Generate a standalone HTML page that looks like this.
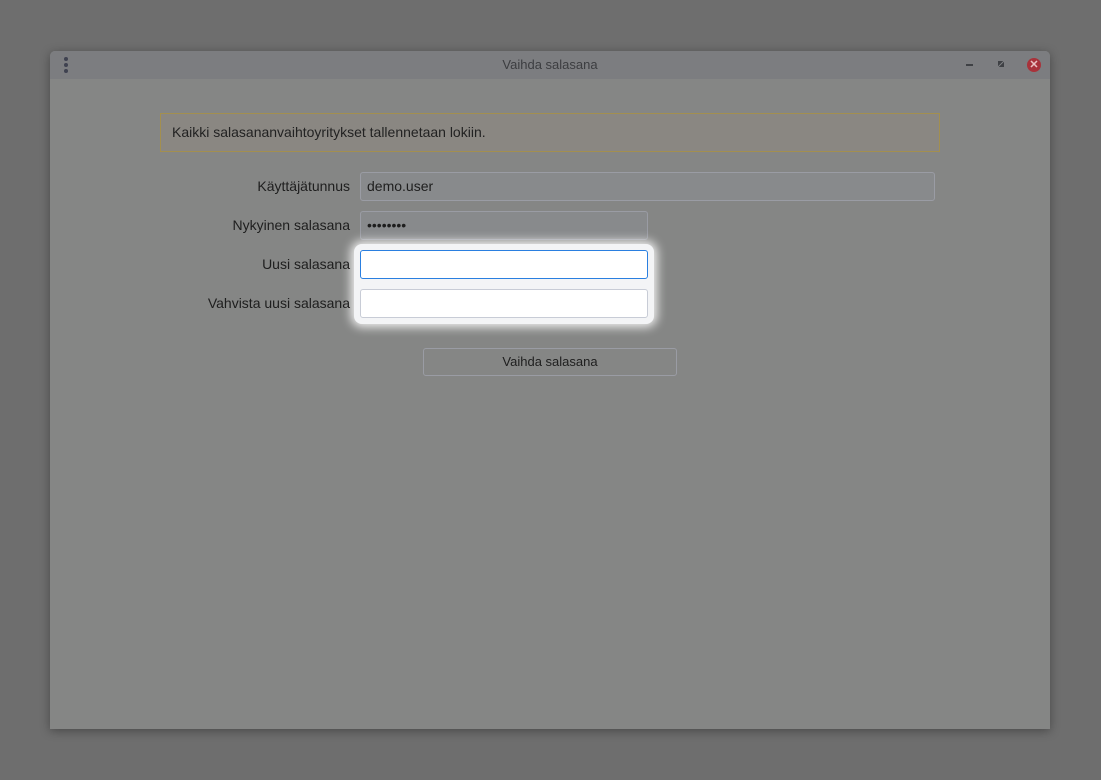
<!DOCTYPE html>
<html><head><style>
body{margin:0;width:1101px;height:780px;background:#6e6e6e;font-family:"Liberation Sans",sans-serif;position:relative;overflow:hidden}
.win{position:absolute;left:50px;top:51px;width:1000px;height:678px;background:#858685;border-radius:5px 5px 0 0;box-shadow:0 2px 10px rgba(0,0,0,.35);overflow:hidden}
.tb{height:28px;background:#7c7d80;position:relative;text-align:center;line-height:28px;font-size:13px;color:#3c3d40}
.a{position:absolute}
.lbl{position:absolute;right:700px;font-size:14px;color:#1e1e1e;line-height:29px}
.inp{position:absolute;box-sizing:border-box;border:1px solid #9a9ca4;border-radius:3px;background:#888a8c;font-size:14px;color:#1e1e1e;line-height:27px;padding-left:6px}
</style></head><body>
<div class="win">
 <div class="tb">Vaihda salasana
  <div class="a" style="left:14px;top:6px;width:4px;height:4px;border-radius:50%;background:#3f4250;box-shadow:0 6px 0 #3f4250,0 12px 0 #3f4250"></div>
  <div class="a" style="left:916px;top:13px;width:7px;height:2px;background:#3f4145"></div>
  <div class="a" style="left:948px;top:10px;width:6px;height:6px;background:linear-gradient(135deg,#3f4145 45%,transparent 45%,transparent 55%,#3f4145 55%)"></div>
  <div class="a" style="left:977px;top:7px;width:14px;height:14px;border-radius:50%;background:#a8323a;color:#e8c0c0;font-size:11px;line-height:14px;font-weight:bold">✕</div>
 </div>
 <div class="a" style="left:110px;top:62px;width:780px;height:39px;box-sizing:border-box;border:1px solid #a38f4f;background:#8a8782;font-size:14px;line-height:37px;padding-left:11px;color:#222">Kaikki salasananvaihtoyritykset tallennetaan lokiin.</div>
 <div class="lbl" style="top:121px">Käyttäjätunnus</div>
 <div class="inp" style="left:310px;top:121px;width:575px;height:29px">demo.user</div>
 <div class="lbl" style="top:160px">Nykyinen salasana</div>
 <div class="inp" style="left:310px;top:160px;width:288px;height:29px">••••••••</div>
 <div class="a" style="left:304px;top:193px;width:300px;height:80px;background:#f3f4f6;border-radius:8px;box-shadow:0 0 10px 3px rgba(255,255,255,.9)"></div>
 <div class="lbl" style="top:199px">Uusi salasana</div>
 <div class="inp" style="left:310px;top:199px;width:288px;height:29px;background:#fff;border-color:#2a7fe0"></div>
 <div class="lbl" style="top:238px">Vahvista uusi salasana</div>
 <div class="inp" style="left:310px;top:238px;width:288px;height:29px;background:#fff;border-color:#c8ccd6"></div>
 <div class="inp" style="left:373px;top:297px;width:254px;height:28px;background:#858685;text-align:center;padding:0;font-size:13px;line-height:26px">Vaihda salasana</div>
</div>
</body></html>
